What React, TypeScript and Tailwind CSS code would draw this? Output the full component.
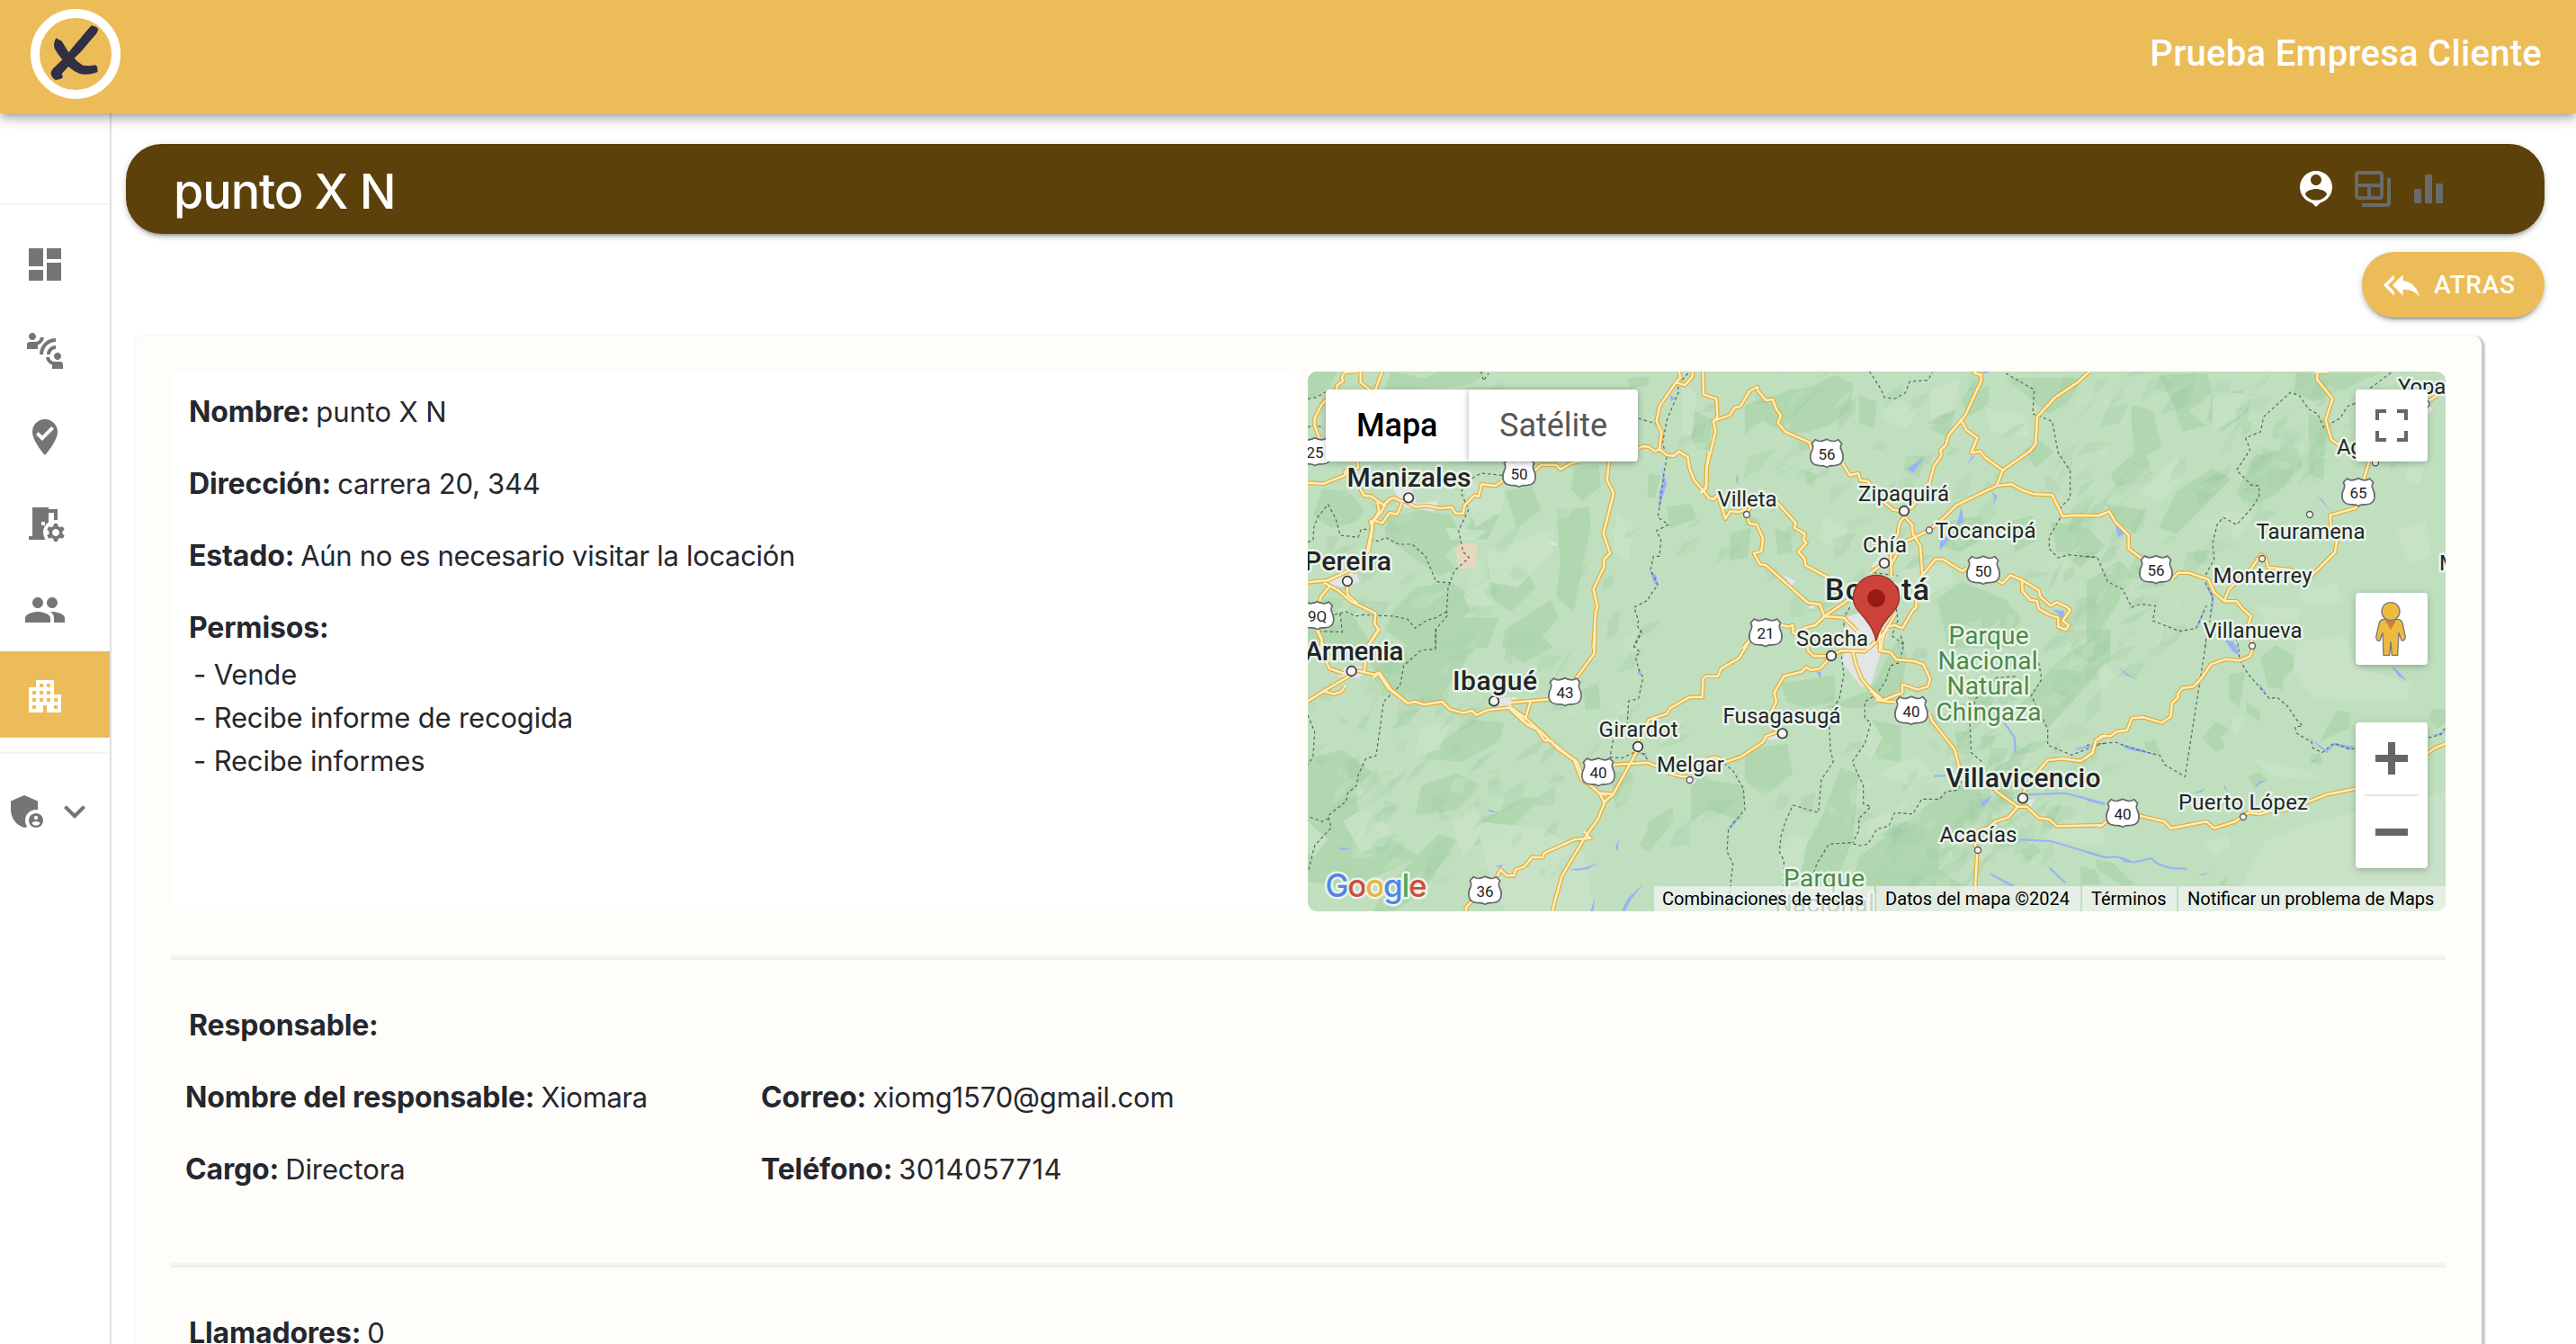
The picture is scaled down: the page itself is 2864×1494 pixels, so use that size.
import React from "react";
import {
  MdAdminPanelSettings,
  MdApartment,
  MdBackupTable,
  MdConnectWithoutContact,
  MdDashboard,
  MdEqualizer,
  MdExpandMore,
  MdPeople,
  MdReplyAll,
  MdRoomPreferences,
  MdWhereToVote,
} from "react-icons/md";

/* ------------------------------------------------------------------ */
/* Map data: geometry is stored per tile, three units per map pixel.   */
/* ------------------------------------------------------------------ */

type TileId = "A" | "B" | "C" | "D" | "E" | "F";

const TILE: Record<TileId, string> = {
  A: "translate(-14 -13) scale(.33333)",
  B: "translate(426 -13) scale(.33333)",
  C: "translate(866 -53) scale(.33333)",
  D: "translate(-14 287) scale(.33333)",
  E: "translate(426 287) scale(.33333)",
  F: "translate(866 287) scale(.33333)",
};
const TILES: TileId[] = ["A", "B", "C", "D", "E", "F"];

const DARK: Record<TileId, string[]> = {
  A: [
    "42,40 140,40 120,80 60,130 42,130",
    "320,38 430,62 480,38 640,38 600,75 540,90 400,98 300,98",
    "90,430 180,440 230,500 205,540 120,560 60,520",
    "310,520 420,500 520,520 560,600 500,650 540,700 480,720 380,650 300,590",
    "400,760 520,740 600,800 560,860 680,860 640,960 380,960 300,900 330,830",
    "870,500 980,490 985,560 955,700 930,840 870,790 885,680",
    "1110,60 1180,55 1175,85 1115,95",
    "1180,380 1220,385 1200,460 1175,460",
    "1240,490 1320,480 1340,530 1250,560",
    "600,500 680,520 640,600 560,590",
    "42,800 200,860 260,960 42,960",
    "640,700 760,680 800,760 720,840 660,800",
    "700,900 850,800 880,860 790,960 690,960",
    "930,360 1010,350 1020,420 960,470 920,430",
    "700,440 790,420 820,500 740,560",
  ],
  B: [
    "180,150 330,100 400,90 480,50 540,80 530,170 460,220 390,240 310,250 240,200 180,250",
    "900,130 950,70 1000,90 990,150 930,190",
    "820,190 880,170 860,260 800,230",
    "820,800 900,740 980,770 1050,800 1100,860 1060,960 860,960",
    "130,580 200,560 190,660 130,670",
    "380,370 420,380 410,420 380,410",
    "1050,60 1310,60 1250,150 1190,180 1120,120",
    "0,160 70,200 60,300 20,300 0,250",
    "560,120 620,140 610,230 560,210",
    "720,320 780,320 760,390 710,370",
    "1060,540 1140,520 1160,600 1080,640",
    "1200,540 1320,560 1380,620 1300,690 1220,640",
    "850,540 960,520 1000,580 900,640 830,620",
    "280,560 330,580 340,640 290,650",
    "1110,300 1170,270 1210,310 1150,360",
  ],
  C: [
    "240,170 400,165 420,230 340,290 400,340 320,360 290,270",
    "150,270 220,290 250,410 200,440 220,500 100,545 80,500 160,430 150,350",
    "700,165 980,165 900,200 760,260 690,230",
    "560,440 700,410 720,470 640,560 540,620 500,560",
    "740,300 800,320 790,520 740,500",
    "300,560 420,480 480,520 400,600 300,700 240,680",
    "60,600 200,620 160,700 100,660",
    "0,860 110,790 160,840 60,1000 0,1080",
    "420,240 520,220 540,290 450,360 400,320",
  ],
  D: [
    "42,430 160,400 260,480 200,520 220,640 420,760 180,860 42,840",
    "200,50 420,60 600,0 600,60 470,250 330,220",
    "720,0 800,0 860,60 760,110 700,70",
    "960,200 1010,180 1020,260 970,270",
    "1050,470 1130,480 1120,560 1070,600",
    "1180,640 1260,590 1260,640 1180,740 1150,720",
    "600,300 700,310 680,370 560,440 420,430 500,360",
    "420,520 540,480 620,520 540,600 400,620",
    "300,860 480,680 540,700 420,880 330,939 260,939",
    "620,640 760,560 820,560 700,680 600,720",
  ],
  E: [
    "360,760 430,640 500,460 560,480 540,700 480,850 370,850",
    "540,850 560,760 700,650 820,560 900,520 1000,560 950,640 830,720 820,850",
    "1100,250 1200,130 1280,60 1400,0 1400,100 1280,230 1190,330",
    "920,180 1020,160 1000,300 930,300",
    "300,180 480,150 480,240 380,260 320,240",
    "440,260 600,200 640,120 700,20 720,100 700,200 600,260",
    "0,440 60,500 180,520 170,640 60,600 0,640",
    "180,400 320,380 340,480 240,560 180,500",
    "1000,600 1020,690 960,690",
    "1100,740 1140,710 1170,740 1120,770",
    "600,300 700,320 700,440 620,430",
    "880,340 930,340 930,420 890,410",
    "560,850 800,780 900,850 900,939 600,939",
    "1300,790 1350,800 1370,850 1300,850",
  ],
  F: [
    "580,90 630,52 690,85 690,130 655,160 655,200 605,190",
    "475,150 530,138 510,255 475,235",
    "530,240 578,275 578,305 535,280",
    "385,360 430,308 475,330 445,360 460,390 430,410",
    "835,268 880,280 875,330 780,370 810,310",
    "30,765 90,780 160,850 120,855 35,800",
    "190,375 230,365 245,420 200,400",
    "1150,265 1197,265 1197,310 1170,330 1140,300",
    "0,0 80,0 60,70 0,130",
    "540,490 575,475 600,500 560,525",
    "440,850 475,810 460,855",
    "745,420 780,410 785,450 750,445",
  ],
};

const LIGHT: Record<TileId, string[]> = {
  A: [
    "500,560 640,570 600,600 520,600",
    "560,400 700,430 690,500 600,560",
    "640,640 860,560 860,640 740,760 650,740",
    "1290,60 1340,120 1320,280 1290,290",
    "1070,500 1130,560 1110,680 1060,640",
    "560,780 640,740 660,820 580,830",
  ],
  B: [
    "800,100 900,60 880,160 800,200",
    "980,160 1120,180 1130,260 1000,240",
    "650,120 760,160 720,230 640,200",
    "700,700 860,680 880,740 760,800",
    "440,520 520,560 500,640 430,600",
  ],
  C: [
    "420,220 560,240 520,300 420,360",
    "180,560 300,440 330,500 240,600",
    "440,620 560,640 500,720",
    "1030,690 1130,660 1150,770 1080,800",
    "700,900 830,860 860,930 740,940",
    "1080,440 1130,470 1110,540 1060,520",
    "560,940 720,950 700,990 600,1000",
  ],
  D: [
    "160,640 220,600 320,660 300,720 220,740",
    "600,640 820,660 960,740 1000,939 700,939 660,860",
    "420,320 520,310 480,400 400,420",
    "520,640 600,600 640,660 560,760",
    "42,640 110,700 60,760 42,740",
    "1060,250 1110,240 1100,300",
  ],
  E: [
    "330,680 390,700 370,800 310,860 290,760",
    "580,640 680,600 740,560 660,660 600,700",
    "620,480 700,440 760,420 800,480 720,520",
    "600,300 640,360 600,430 560,400",
    "1180,660 1380,660 1380,720 1200,700",
    "720,200 800,240 780,300 700,280",
  ],
  F: [
    "600,700 760,640 1197,540 1197,855 520,855 540,800",
    "385,715 470,680 480,720 430,755",
    "700,40 860,20 900,120 1080,180 1070,240 760,230 690,140",
    "550,430 740,470 780,500 620,490",
    "485,300 520,290 525,330 490,350",
    "30,150 60,110 90,150 60,200",
  ],
};

const URBAN: Record<TileId, string[]> = {
  A: [
    "325,430 390,430 405,480 475,470 465,505 365,490",
    "105,740 200,705 215,740 150,760",
    "845,615 860,605 878,622",
  ],
  B: ["510,860 600,830 680,850 640,960 540,960", "600,690 640,640 665,660 650,700", "305,715 350,738 335,752", "390,825 415,815 410,832"],
  C: ["1120,290 1145,275 1155,285 1140,300"],
  D: ["145,155 165,125 240,120 215,160", "680,228 740,225 720,255 660,255", "1320,500 1340,500 1325,520"],
  E: ["500,100 560,0 655,0 600,185 570,190 520,130", "250,365 290,340 320,368", "1110,570 1145,565 1135,590"],
  F: [],
};

const WATER: Record<TileId, string[]> = {
  A: [
    "1250,118 1268,128 1255,138",
    "1224,350 1228,380 1240,410 1225,460 1212,505 1215,440 1226,410",
    "1182,703 1205,720 1210,760 1195,740",
  ],
  B: [
    "722,362 778,325 740,378",
    "902,490 910,540 885,555",
    "830,635 832,600 885,570",
    "1003,440 1022,455 1010,480 1012,460",
    "920,350 935,325 950,318",
    "155,378 158,420 150,400",
    "1205,832 1245,838 1240,880 1228,850",
    "965,38 1000,38 980,46",
  ],
  C: ["95,670 125,700 105,712", "770,573 790,590 808,622", "390,860 410,885 425,910 415,990 418,915", "395,940 378,1000 362,1020", "460,1050 510,1080 495,1080"],
  D: [
    "1145,125 1155,152 1143,148",
    "145,725 190,732 155,735",
    "640,598 680,610 650,608",
    "665,790 690,783 688,792",
    "1080,698 1075,740 1068,725",
    "915,798 960,795 1015,778 975,798 940,803",
    "1162,847 1120,900 1100,939 1090,935 1110,895",
    "1000,890 995,939 985,939",
    "1145,410 1170,412 1172,425",
  ],
  E: ["418,140 435,142 432,162", "952,548 970,575 1008,550 975,592", "162,625 140,655 125,668 140,640"],
  F: [
    "103,122 140,150 178,172 130,150",
    "460,35 490,40 510,88 490,75",
    "575,178 595,205 585,205",
    "730,352 800,402 825,378 895,390 880,400 825,386 800,412",
    "370,815 400,812 425,803 390,818",
    "575,505 605,505 578,512 555,540",
    "460,517 472,540 460,530",
    "355,545 395,530 380,543",
    "745,440 770,430 765,438",
    "1150,352 1197,338 1185,350",
    "1015,120 1040,138 1067,170 1040,155",
    "100,378 180,398 240,420 140,400",
    "320,910 345,895 335,905",
    "100,757 125,760 155,776 130,776",
  ],
};

const RIVERS: Record<TileId, string[]> = {
  A: [],
  B: [],
  C: [],
  D: [],
  E: ["1045,310 1080,360 1082,410", "1120,550 1250,545 1380,580", "1090,700 1200,705 1380,758", "810,488 850,487", "1195,793 1250,845", "1000,815 1075,855", "1285,398 1330,388"],
  F: ["0,567 60,582", "0,742 60,760 100,757 155,776 215,762 235,780 280,795 335,797"],
};

const ROADS: Record<TileId, string[]> = {
  A: [
    "205,38 165,42 155,60 160,70 140,85 140,95 125,110 88,150 65,195 65,220 80,260",
    "218,38 218,75 255,105",
    "290,38 268,100",
    "42,410 95,413 165,385 168,370 210,360 208,340",
    "215,425 228,452 255,455 285,478 300,485 285,510 260,540 240,640 225,690 190,710",
    "275,478 280,505 262,535 250,540 258,560 245,640",
    "295,485 315,465 330,460 350,470 375,475 400,490 440,487 480,495 522,492 535,512 560,512 565,485 598,452 612,455 622,415 668,420 690,405",
    "262,535 290,545 315,510 340,515 355,480",
    "800,368 820,350 870,350 885,365 920,345 945,340",
    "1047,340 1040,400 1062,445 1028,580 1050,645 1030,665 1030,690 995,765 1008,825 1002,840 995,960",
    "42,742 110,735 185,700 210,670",
    "100,745 145,770 185,805 268,845 265,880 278,900 245,950",
    "172,745 175,785 205,810",
    "82,805 85,790 115,755",
    "72,900 90,935 85,960",
    "1145,295 1160,288 1180,290 1200,305 1215,298 1240,318 1262,320 1280,305 1310,325 1315,360 1330,400 1380,460",
    "1215,298 1222,240 1205,205 1215,155 1270,75 1285,60 1280,38",
    "1270,75 1300,85 1325,55 1325,38",
    "1380,310 1372,360 1370,430 1355,440",
  ],
  B: [
    "40,38 42,115 85,130 88,190 75,205 82,240 52,360 52,420 38,440",
    "85,200 130,185 145,160 165,155 195,105 222,90 225,105 250,135 272,132 285,165 300,185 290,210 315,240 395,275 402,300",
    "60,460 75,465 90,450 115,530 130,505 160,508 180,500",
    "185,516 195,545 220,550 240,595 235,640 210,645 230,682 250,685 390,810 430,815 445,855",
    "185,510 210,480 250,465 285,472 350,545 345,560 380,580 375,600 385,610 358,640 380,665 382,685 455,725 485,750",
    "505,345 530,385 558,378 565,402 590,405 620,440 650,480 675,500 710,505",
    "795,415 810,355 835,320 832,300 850,285 860,250 915,185 968,70 968,50 945,45 950,38",
    "900,200 920,235 955,260 935,310 965,305 980,325 1040,368",
    "1330,38 1290,75 1215,125 1155,190 1150,280 1130,305 1040,368 1020,420 885,485 850,520 795,568 740,595 690,615",
    "1020,420 1070,415 1105,435 1145,448 1205,450 1240,522 1275,518 1355,520 1380,512",
    "710,505 740,490 790,415",
    "710,525 695,545 690,580 665,625 668,720",
    "715,525 738,550 740,580 765,620 772,715",
    "690,640 670,680",
    "640,680 600,710",
    "775,715 815,665 840,665 905,705 920,695",
    "1020,735 1040,745 1065,718 1105,735 1160,768 1165,790 1200,820 1220,808 1255,825 1265,835 1240,870 1260,885 1250,900 1225,890 1225,860 1195,850 1160,830 1155,805 1130,800 1105,770 1105,740",
    "775,720 750,780 752,825 740,835 705,895 680,885 655,890 640,925 635,960",
    "445,855 525,800 540,790",
    "445,855 510,860 555,905",
    "445,855 415,885 375,895 380,930",
    "305,885 325,890 340,885 340,910 370,925",
    "195,935 175,960",
    "595,960 640,920 680,850",
  ],
  C: [
    "40,640 75,625 95,660 140,705 140,750 180,780",
    "285,850 305,830 340,830 405,852 425,895 460,925 500,925 520,950 548,975 540,1000 552,1070",
    "460,920 475,885 510,850 550,815 580,770 595,775 605,812 680,820 740,850 828,762 835,720 815,690 812,638 895,615 905,605",
    "925,515 942,460",
    "770,160 768,185 820,250 797,320 815,385 835,400 870,400",
    "765,162 800,160",
    "1145,255 1180,230",
  ],
  D: [
    "75,0 90,40 85,70 115,130 160,145",
    "280,0 245,50 230,135",
    "42,238 95,205 188,150",
    "95,205 130,215 155,205 165,190",
    "188,138 215,138 265,150 280,142 320,200 375,245 400,240 430,250 490,240 515,265 560,278 590,270 605,285 640,268 712,260",
    "262,160 278,145 310,195 350,225",
    "720,243 850,232",
    "785,240 768,295",
    "712,260 760,305 820,340 880,400 930,435 955,500 985,520 1015,545 1035,550",
    "720,260 770,295 850,370 905,415 940,440 955,480",
    "730,265 775,318 805,330 830,368 855,372",
    "1000,0 997,80 935,165",
    "1143,400 1060,550 1035,570 1010,630 965,695 890,820 870,890 858,939",
    "1015,545 1030,575",
    "1015,545 1060,548",
    "1065,450 1175,443 1205,455 1250,480 1290,490 1315,490",
    "965,675 985,695 930,700 830,745 825,760 790,758 765,790 735,800 730,820 705,820 685,800 672,825",
    "590,905 570,925 570,939",
  ],
  E: [
    "195,38 160,95 100,130 90,155 50,155 40,165 38,225 -5,225 -70,262 -80,280 -140,300 -175,370",
    "390,50 390,70 410,88 455,88",
    "655,0 620,35 580,72 500,70 468,88 430,130 400,135 385,125 370,140 310,155 278,210 285,240 270,270 275,330 305,345",
    "305,335 250,355 240,375 165,425 120,440 80,425 50,432",
    "540,72 550,115 570,165 600,200 625,235 660,240 680,240",
    "630,0 630,70 665,75 685,100 745,105 775,115 798,165 790,190 755,200 705,182 705,210 665,225 640,235 595,195",
    "600,205 630,225 620,235",
    "795,280 805,305 880,400 895,460",
    "895,460 905,500 1000,515 1020,540 1090,590 1060,625 1015,640 995,660 960,670 945,710 955,735 948,865 978,939",
    "1105,555 1120,520 1160,470 1190,435 1240,430 1300,438 1340,410 1350,370 1380,353",
    "1090,590 1120,590 1160,628 1195,632 1220,655 1370,652",
  ],
  F: [
    "0,425 20,410 30,370 50,355 80,355 100,340 135,335 150,295 190,292 250,310 280,290 285,245 305,225 303,215 318,195 355,190 380,165 415,115 465,98 510,103 545,88 555,60 540,0",
    "40,655 48,655 65,640",
    "175,620 260,640 280,662 400,640 425,662 495,640 522,620 540,610 575,615 620,603 680,600 735,575 800,550 897,530",
    "1137,412 1160,395 1197,380",
  ],
};

const BORDERS: Record<TileId, string[]> = {
  A: [
    "42,130 70,125 105,105",
    "42,225 65,215 95,228",
    "42,608 60,600 62,560 75,525 110,482 135,530 150,585 210,592 220,565 250,565 250,600 280,605 300,592 345,615 390,615 435,655 470,740 518,743",
    "620,38 628,70 645,45",
    "690,385 620,378 590,395 552,440 578,500 545,570 560,640 580,660 530,705 510,760 505,840 510,850 468,900 468,960",
    "505,840 470,860 440,868 400,895 375,865 330,855 230,850 200,855 170,840 130,850",
    "150,845 157,908 70,905",
    "1145,195 1210,215",
    "1310,45 1275,85 1280,105 1240,200 1225,280 1240,320 1230,380 1210,525 1245,550 1205,570 1220,600 1215,655 1195,655 1185,700 1210,750 1180,790 1180,800 1130,825 1145,870 1140,885 1155,910 1130,960",
  ],
  B: [
    "595,38 635,100 645,125 680,130 715,110 730,72 790,68 805,42",
    "1050,45 1145,100 1140,180 1205,205 1225,310 1265,370 1265,460 1235,490 1230,530 1195,590 1195,630 1225,660 1260,650 1355,660",
    "610,710 690,720",
    "530,825 510,860 510,890",
    "685,830 690,870 670,920 710,950",
  ],
  C: [
    "0,775 35,778 70,860 120,885 150,945 180,935 230,940 220,990 310,1025 365,1015 400,940",
    "1015,163 945,215",
    "895,265 870,275 845,315 790,345 770,300 740,285 710,240 680,228 590,310 580,360 530,380 545,420 500,488 550,538 575,540 575,575 550,615 500,670 455,645 435,670 420,730 425,785 390,850 420,910 410,995",
    "400,1030 395,1080",
  ],
  D: [
    "1155,0 1130,55 1150,75 1135,90 1145,130 1160,160 1145,230 1112,238 1108,310 1060,370 1050,425 1090,428 1140,405 1165,415 1180,445 1250,480 1310,488",
    "470,0 468,65 420,68 362,120 350,185 295,240 270,420 235,430 210,485 205,520 175,545 170,572 110,620 120,660 65,720 45,800",
    "50,625 90,640 110,630",
    "42,285 65,340 60,420 45,450",
  ],
  E: [
    "500,70 510,150 495,230 460,280 465,400 475,440 435,500 425,610 340,585 315,640 300,690 295,740 310,770 310,850 290,900",
    "700,20 710,50 695,110 665,120 650,170 620,215 580,240 580,295 600,310 580,380 538,440 575,520 575,580 600,590 560,630 560,670 540,710",
    "110,445 140,470 175,530 180,600 125,665 120,740 140,780 122,939",
    "410,810 420,780 460,715 530,710 560,720 590,715 620,665 660,655 680,610 740,615 770,565 830,565 850,540 890,535 905,495",
    "970,440 935,410 930,300 950,230 1020,160 1090,155",
    "1160,110 1170,165 1135,220 1190,330 1190,385 1270,418 1340,390 1380,378",
  ],
  F: [
    "0,385 95,375 170,400 245,420 260,450 328,490 398,40",
    "490,10 505,50 510,100 540,150 610,230 635,225 670,255 700,300 720,320 695,325 700,345 750,375 755,395 785,410 825,378 880,400 897,395",
    "1140,360 1180,350 1197,325",
  ],
};

/* Relief facets: soft slanted shards scattered over the mountain ranges. */
type Facet = { pts: string; fill: string; opacity: number };
const RANGES: [number, number, number, number, number][] = [
  [180, 300, 190, 280, 130],
  [90, 480, 110, 120, 60],
  [560, 140, 170, 150, 60],
  [790, 130, 130, 130, 50],
  [960, 120, 130, 130, 80],
  [790, 400, 120, 120, 80],
  [640, 450, 150, 150, 70],
  [740, 520, 110, 80, 60],
  [330, 480, 120, 110, 30],
  [1120, 70, 110, 70, 30],
  [880, 270, 80, 80, 45],
];
function buildFacets(): Facet[] {
  let seed = 20417;
  const rnd = () => {
    seed = (seed * 16807) % 2147483647;
    return seed / 2147483647;
  };
  const out: Facet[] = [];
  for (const [cx, cy, rx, ry, count] of RANGES) {
    for (let i = 0; i < count; i++) {
      const a = rnd() * Math.PI * 2;
      const d = Math.sqrt(rnd());
      const x = cx + Math.cos(a) * d * rx;
      const y = cy + Math.sin(a) * d * ry;
      const len = 10 + rnd() * 40;
      const wid = 5 + rnd() * 12;
      const t = -1.1 + rnd() * 0.8;
      const c = Math.cos(t);
      const s = Math.sin(t);
      const p = [
        [0, 0],
        [len * 0.5, -wid * (0.4 + rnd() * 0.6)],
        [len, (rnd() - 0.5) * wid],
        [len * (0.3 + rnd() * 0.4), wid * (0.3 + rnd() * 0.5)],
      ]
        .map(([u, v]) => `${(x + u * c - v * s).toFixed(1)},${(y + u * s + v * c).toFixed(1)}`)
        .join(" ");
      const light = rnd() > 0.55;
      out.push({ pts: p, fill: light ? "#cbe4c5" : "#97c79b", opacity: light ? 0.15 + rnd() * 0.25 : 0.1 + rnd() * 0.18 });
    }
  }
  return out;
}
const FACETS = buildFacets();

/* [tile, x, y, label] */
const SHIELDS: [TileId, number, number, string][] = [
  ["A", 747, 378, "50"],
  ["A", 66, 307, "25"],
  ["A", 74, 853, "9Q"],
  ["B", 453, 312, "56"],
  ["B", 249, 910, "21"],
  ["B", 975, 702, "50"],
  ["C", 906, 562, "65"],
  ["C", 231, 820, "56"],
  ["D", 900, 208, "43"],
  ["D", 1011, 475, "40"],
  ["D", 633, 870, "36"],
  ["E", 735, 270, "40"],
  ["F", 120, 612, "40"],
];

/* [tile, x, y, radius] */
const DOTS: [TileId, number, number, number][] = [
  ["A", 378, 460, 16],
  ["A", 174, 738, 16],
  ["B", 711, 504, 16],
  ["B", 645, 678, 16],
  ["B", 795, 568, 10.5],
  ["B", 186, 516, 10.5],
  ["D", 188, 138, 16],
  ["D", 663, 238, 16],
  ["D", 1143, 390, 16],
  ["D", 1316, 501, 10.5],
  ["E", 305, 346, 16],
  ["E", 468, 87, 16],
  ["E", 1107, 562, 16],
  ["E", 957, 735, 10.5],
  ["C", 744, 636, 10.5],
  ["C", 585, 783, 10.5],
  ["C", 963, 463, 10.5],
  ["C", 552, 1074, 10.5],
  ["C", 1133, 267, 10.5],
  ["F", 522, 624, 10.5],
];

type Label = { t: string; x: number; y: number; w: number; s: number; bold?: boolean; park?: boolean };
const LABELS: Label[] = [
  { t: "Parque", x: 712.5, y: 302.5, w: 89, s: 28, park: true },
  { t: "Nacional", x: 700.5, y: 331, w: 111, s: 28, park: true },
  { t: "Natural", x: 710.5, y: 359, w: 92, s: 28, park: true },
  { t: "Chingaza", x: 698.5, y: 387.5, w: 117, s: 28, park: true },
  { t: "Parque", x: 529, y: 572.5, w: 90, s: 28, park: true },
  { t: "Nacional", x: 519, y: 600.5, w: 111, s: 28, park: true },
  { t: "Manizales", x: 43.5, y: 127.5, w: 138, s: 30, bold: true },
  { t: "Pereira", x: -4, y: 220.5, w: 97, s: 30, bold: true },
  { t: "Armenia", x: -3.5, y: 320.5, w: 110, s: 30, bold: true },
  { t: "Ibagué", x: 161, y: 353.5, w: 94, s: 30, bold: true },
  { t: "Villavicencio", x: 709.5, y: 461.5, w: 172, s: 30, bold: true },
  { t: "Bogotá", x: 575, y: 253.5, w: 116, s: 34, bold: true },
  { t: "Girardot", x: 323.5, y: 405.5, w: 88, s: 24 },
  { t: "Melgar", x: 388, y: 444.5, w: 75, s: 24 },
  { t: "Fusagasugá", x: 461.5, y: 390.7, w: 131, s: 24 },
  { t: "Soacha", x: 543, y: 304.5, w: 80, s: 24 },
  { t: "Chía", x: 617, y: 200.7, w: 49, s: 24 },
  { t: "Tocancipá", x: 697.5, y: 185, w: 112, s: 24 },
  { t: "Zipaquirá", x: 612, y: 144, w: 101, s: 24 },
  { t: "Villeta", x: 455.5, y: 149.5, w: 66, s: 24 },
  { t: "Acacías", x: 702.5, y: 523, w: 86, s: 24 },
  { t: "Puerto López", x: 968, y: 486.5, w: 144, s: 24 },
  { t: "Villanueva", x: 995.5, y: 296, w: 110, s: 24 },
  { t: "Monterrey", x: 1006.5, y: 235, w: 110, s: 24 },
  { t: "Tauramena", x: 1054.5, y: 185.5, w: 121, s: 24 },
  { t: "Aguazul", x: 1144, y: 91.5, w: 84, s: 24 },
  { t: "Yopal", x: 1212, y: 25, w: 59, s: 24 },
  { t: "Maní", x: 1258, y: 220.5, w: 50, s: 24 },
];

function MapCanvas() {
  const layer = (data: Record<TileId, string[]>, props: React.SVGProps<SVGPolygonElement>) =>
    TILES.map((id) => (
      <g key={id} transform={TILE[id]}>
        {data[id].map((p, i) => (
          <polygon key={i} points={p} {...props} />
        ))}
      </g>
    ));
  const lines = (data: Record<TileId, string[]>, props: React.SVGProps<SVGPolylineElement>) =>
    TILES.map((id) => (
      <g key={id} transform={TILE[id]}>
        {data[id].map((p, i) => (
          <polyline key={i} points={p} fill="none" strokeLinejoin="round" {...props} />
        ))}
      </g>
    ));
  return (
    <svg className="block h-[600px] w-[1265px]" viewBox="0 0 1265 600" aria-hidden="true">
      <rect width="1265" height="600" fill="#bfdfbf" />
      {layer(DARK, { fill: "#aed6ae", opacity: 0.9 })}
      {layer(LIGHT, { fill: "#c8e3c8", opacity: 0.85 })}
      {FACETS.map((f, i) => (
        <polygon key={i} points={f.pts} fill={f.fill} opacity={f.opacity} />
      ))}
      {layer(URBAN, { fill: "#e3e5e9" })}
      <g transform={TILE.A}>
        <polygon points="555,612 600,612 607,625 600,695 555,697 543,680 535,630" fill="#e6d8bf" />
      </g>
      {layer(WATER, { fill: "#97b2f8" })}
      {lines(RIVERS, { stroke: "#97b2f8", strokeWidth: 6 })}
      {lines(BORDERS, { stroke: "#56665c", strokeWidth: 3.6, strokeDasharray: "10 9" })}
      {lines(ROADS, { stroke: "#e3ac35", strokeWidth: 14.5 })}
      {lines(ROADS, { stroke: "#fdedbb", strokeWidth: 7.5, strokeLinecap: "square" })}
      {DOTS.map(([id, x, y, r], i) => (
        <g key={i} transform={TILE[id]}>
          <circle cx={x} cy={y} r={r} fill="#f4f4f4" stroke={r > 12 ? "#333538" : "#55585c"} strokeWidth={r > 12 ? 5 : 4} />
        </g>
      ))}
      {SHIELDS.map(([id, x, y, n], i) => (
        <g key={i} transform={`${TILE[id]} translate(${x} ${y})`}>
          <path
            d="M-50-33-38-46Q-28-39-18-41Q-7-43 0-47Q7-43 18-41Q28-39 38-46L50-33Q43-23 48-12Q56 2 54 18Q50 39 28 40Q8 40 0 46Q-8 40-28 40Q-50 39-54 18Q-56 2-48-12Q-43-23-50-33Z"
            fill="#fff"
            stroke="#67696c"
            strokeWidth="5"
            strokeLinejoin="round"
          />
          <text y="21" textAnchor="middle" fontSize="51" className="fill-[#222326] font-[Roboto,sans-serif]">
            {n}
          </text>
        </g>
      ))}
      {LABELS.map((l, i) => (
        <text
          key={i}
          x={l.x}
          y={l.y}
          textLength={l.w}
          fontSize={l.s}
          fontWeight={l.bold ? 500 : 400}
          stroke="#e9f4e9"
          strokeWidth="5"
          strokeLinejoin="round"
          paintOrder="stroke"
          className={l.park ? "fill-[#4b8a47] font-[Roboto,sans-serif]" : "fill-[#222428] font-[Roboto,sans-serif]"}
        >
          {l.t}
        </text>
      ))}
      <g transform={TILE.B}>
        <path
          d="M618 938C611 905 600 888 579 861C553 832 541 818 541 795A77 77 0 0 1 695 795C695 818 683 832 657 861C636 888 625 905 618 938Z"
          fill="#cb4339"
          stroke="#9e2b25"
          strokeWidth="4"
        />
        <circle cx="618" cy="795" r="30" fill="#991915" />
      </g>
      <text
        x="19.5"
        y="583.5"
        textLength="113"
        fontSize="35"
        fontWeight="500"
        stroke="#eaf5ea"
        strokeWidth="5"
        strokeLinejoin="round"
        paintOrder="stroke"
        className="font-[Inter,sans-serif]"
      >
        <tspan fill="#5383ec">G</tspan>
        <tspan fill="#d04b3e">o</tspan>
        <tspan fill="#e6b63c">o</tspan>
        <tspan fill="#5383ec">g</tspan>
        <tspan fill="#58a55c">l</tspan>
        <tspan fill="#d04b3e">e</tspan>
      </text>
    </svg>
  );
}

/* ------------------------------------------------------------------ */

const CTRL = "absolute right-5 w-20 rounded-[4px] bg-white shadow-[0_2px_8px_-1px_rgba(0,0,0,0.3)]";

function LocationMap() {
  return (
    <div className="relative h-[600px] w-[1265px] shrink-0 overflow-hidden rounded-[10px] font-[Roboto,sans-serif]">
      <MapCanvas />
      <div className="absolute left-5 top-5 flex h-20 rounded-[4px] bg-white text-[36px] leading-[80px] shadow-[0_2px_8px_-1px_rgba(0,0,0,0.3)]">
        <div className="w-[159px] pl-[34px] font-medium text-black">Mapa</div>
        <div className="w-[188px] rounded-r-[4px] pl-[34px] text-[#565656] shadow-[-2px_0_6px_-1px_rgba(0,0,0,0.25)]">Satélite</div>
      </div>
      <div className={`${CTRL} top-5 h-20`}>
        <svg viewBox="0 0 80 80" className="size-20">
          <path d="M24 34V24h10M46 24h10v10M56 46v10H46M34 56H24V46" fill="none" stroke="#666" strokeWidth="4" />
        </svg>
      </div>
      <div className={`${CTRL} top-[246px] h-20`}>
        <svg viewBox="897 897 240 240" className="size-20">
          <path
            d="M987 986H1043Q1052 990 1054 1000L1063 1044Q1062 1058 1050 1056L1041 1030 1037 1105H1018L1014 1060 1010 1105H990L987 1030 978 1056Q966 1060 965 1044L975 1000Q977 990 987 986Z"
            fill="#eebb40"
            stroke="#77797c"
            strokeWidth="4"
          />
          <path d="M996 990H1032L1014 1020Z" fill="#cd8138" />
          <circle cx="1014" cy="959" r="30" fill="#eebb40" stroke="#77797c" strokeWidth="4" />
        </svg>
      </div>
      <div className={`${CTRL} top-[390px] flex h-[162px] flex-col items-center`}>
        <svg viewBox="0 0 80 80" className="size-20">
          <path d="M22 40H58M40 22V58" stroke="#666" strokeWidth="8" />
        </svg>
        <div className="h-0.5 w-[60px] bg-[#e6e6e6]" />
        <svg viewBox="0 0 80 80" className="size-20">
          <path d="M22 40H58" stroke="#666" strokeWidth="8" />
        </svg>
      </div>
      <div className="absolute bottom-0 right-0 flex h-7 gap-0.5 text-[20px] leading-[29px] text-black">
        <div className="w-[245px] bg-[#f5f5f5]/70 pl-[9px]">Combinaciones de teclas</div>
        <div className="w-[227px] bg-[#f5f5f5]/70 pl-[10px]">Datos del mapa ©2024</div>
        <div className="w-[105px] bg-[#f5f5f5]/70 pl-[10px]">Términos</div>
        <div className="w-[297px] bg-[#f5f5f5]/70 pl-[10px]">Notificar un problema de Maps</div>
      </div>
    </div>
  );
}

function Field({ label, value, tracking = "tracking-[-0.33px]" }: { label: string; value?: string; tracking?: string }) {
  return (
    <p className="flex h-12 items-baseline gap-[7px] whitespace-nowrap text-[32px] leading-[48px]">
      <strong className="font-bold tracking-[-0.15px]">{label}</strong>
      {value && <span className={`text-[31px] ${tracking}`}>{value}</span>}
    </p>
  );
}

function Rule({ className = "" }: { className?: string }) {
  return <div className={`h-1.5 border-b-2 border-[#eeeded] bg-[#f6f5f3] ${className}`} />;
}

const NAV = [
  { icon: MdDashboard },
  { icon: MdConnectWithoutContact },
  { icon: MdWhereToVote },
  { icon: MdRoomPreferences },
  { icon: MdPeople },
  { icon: MdApartment, active: true },
];

function Sidebar() {
  return (
    <aside className="flex w-[124px] shrink-0 flex-col border-r-2 border-[#e0e0e0] text-[#757575]">
      <div className="h-[102px] border-b-2 border-[#f4f4f4]" />
      <nav className="border-b-2 border-[#f4f4f4] py-4">
        {NAV.map(({ icon: Icon, active }, i) => (
          <div key={i} className={`flex h-24 items-center pl-[26px] pt-1 ${active ? "bg-[#ecbc58] text-white" : ""}`}>
            <Icon className="size-12" />
          </div>
        ))}
      </nav>
      <div className="flex gap-[5px] pl-1.5 pt-10">
        <MdAdminPanelSettings className="size-12" />
        <MdExpandMore className="size-12" />
      </div>
    </aside>
  );
}

function Logo() {
  return (
    <svg viewBox="102 30 300 300" className="size-[100px]">
      <circle cx="252" cy="180" r="135" fill="none" stroke="#fff" strokeWidth="30" />
      <path
        d="M305 85 322 90 328 99 322 112 296 142 272 170 248 194Q262 210 277 218L300 220 318 217 324 222 326 240 308 246Q286 251 266 246 246 238 228 222L206 246 210 258 202 263 186 267Q172 260 170 246 170 232 184 222L208 199Q190 178 181 160 178 142 187 127L206 137 229 175 256 142 268 128 280 113Z"
        fill="#302f43"
      />
    </svg>
  );
}

export default function App() {
  return (
    <div className="flex h-[1494px] w-[2864px] flex-col overflow-hidden bg-white font-[Inter,sans-serif] text-[#26272e]">
      <header className="relative z-10 flex h-[126px] shrink-0 items-start justify-between bg-[#ecbc58] pl-[34px] pr-[38px] shadow-[0_4px_8px_-2px_rgba(0,0,0,0.2),0_8px_10px_0_rgba(0,0,0,0.14),0_2px_20px_0_rgba(0,0,0,0.12)]">
        <div className="pt-2.5">
          <Logo />
        </div>
        <div className="pt-[33px] font-[Roboto,sans-serif] text-[40px] font-medium leading-[54px] tracking-[0.28px] text-white">
          Prueba Empresa Cliente
        </div>
      </header>

      <div className="flex min-h-0 flex-1">
        <Sidebar />
        <main className="min-w-0 flex-1 pl-4 pr-[35px] pt-[34px]">
          <div className="flex h-[100px] items-center justify-between rounded-[40px] bg-[#5c410a] pl-[53px] pr-[105px] text-white shadow-[0_6px_2px_-4px_rgba(0,0,0,0.2),0_4px_4px_0_rgba(0,0,0,0.14),0_2px_10px_0_rgba(0,0,0,0.12)]">
            <h1 className="pt-1.5 text-[54px] font-[450] leading-[72px] tracking-[-1.1px]">punto X N</h1>
            <div className="flex gap-[14.5px] pb-0.5 pt-px text-[#6a6a6a]">
              <svg viewBox="0 0 24 24" className="size-12 fill-white">
                <path d="M12 2c-4.97 0-9 4.03-9 9 0 4.17 2.84 7.67 6.69 8.69L12 22l2.31-2.31C18.16 18.67 21 15.17 21 11c0-4.97-4.03-9-9-9zm0 2c1.66 0 3 1.34 3 3s-1.34 3-3 3-3-1.34-3-3 1.34-3 3-3zm0 14.3c-2.5 0-4.71-1.28-6-3.22.03-1.99 4-3.08 6-3.08 1.99 0 5.97 1.09 6 3.08-1.29 1.94-3.5 3.22-6 3.22z" />
              </svg>
              <MdBackupTable className="size-12" />
              <MdEqualizer className="size-12" />
            </div>
          </div>

          <div className="mt-5 flex justify-end">
            <button className="flex h-[73px] w-[203px] items-center gap-4 rounded-[36px] bg-[#ecbc58] pl-6 font-[Roboto,sans-serif] text-[28px] font-medium tracking-[0.7px] text-white shadow-[0_6px_2px_-4px_rgba(0,0,0,0.2),0_4px_4px_0_rgba(0,0,0,0.14),0_2px_10px_0_rgba(0,0,0,0.12)]">
              <MdReplyAll className="size-10 shrink-0" />
              ATRAS
            </button>
          </div>

          <section className="ml-2.5 mt-5 h-[1300px] w-[2609px] rounded-[10px] bg-[#fffdf9] px-10 pt-10 shadow-[3px_2px_2px_1px_rgba(0,0,0,0.2),0_0_1px_1px_rgba(0,0,0,0.04)]">
            <div className="flex h-[600px] justify-between">
              <div className="w-[1252px] rounded-[10px] bg-white pl-[20px] pt-[21px]">
                <div className="flex flex-col gap-8">
                  <Field label="Nombre:" value="punto X N" tracking="tracking-[-0.1px]" />
                  <Field label="Dirección:" value="carrera 20, 344" tracking="tracking-[-0.25px]" />
                  <Field label="Estado:" value="Aún no es necesario visitar la locación" />
                  <Field label="Permisos:" />
                </div>
                <ul className="mt-1 pl-[5px] text-[31px] leading-[48px] tracking-[-0.17px]">
                  {["Vende", "Recibe informe de recogida", "Recibe informes"].map((p) => (
                    <li key={p}>- {p}</li>
                  ))}
                </ul>
              </div>
              <LocationMap />
            </div>

            <Rule className="mt-12" />

            <div className="pt-[49px]">
              <div className="pl-[20px]">
                <Field label="Responsable:" />
              </div>
              <div className="mt-8 grid grid-cols-[640px_1fr] gap-y-8 pl-[16px]">
                <Field label="Nombre del responsable:" value="Xiomara" />
                <Field label="Correo:" value="xiomg1570@gmail.com" tracking="tracking-[-0.15px]" />
                <Field label="Cargo:" value="Directora" tracking="tracking-[-0.1px]" />
                <Field label="Teléfono:" value="3014057714" tracking="tracking-[0.35px]" />
              </div>
            </div>

            <Rule className="mt-[79px]" />

            <div className="pl-[20px] pt-[49px]">
              <Field label="Llamadores:" value="0" />
            </div>
          </section>
        </main>
      </div>
    </div>
  );
}
